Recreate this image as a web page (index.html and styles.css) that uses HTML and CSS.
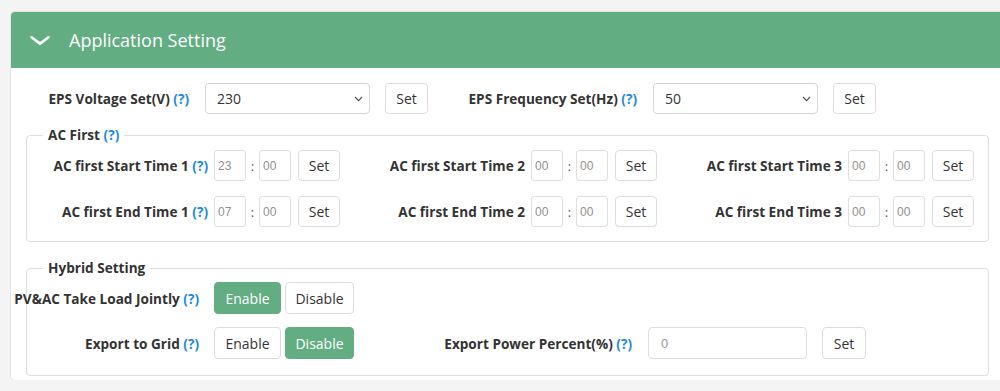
FILE: index.html
```html
<!DOCTYPE html>
<html>
<head>
<meta charset="utf-8">
<link rel="stylesheet" href="styles.css">
</head>
<body>
<div class="card">
  <div class="card-header">
    <svg class="hdr-chevron" width="20" height="9" viewBox="0 0 20 9"><polyline points="1.5,1.2 10,7.6 18.5,1.2" fill="none" stroke="#ffffff" stroke-width="2.6" stroke-linecap="round" stroke-linejoin="round"/></svg>
    <span class="hdr-title">Application Setting</span>
  </div>
  <div class="card-body">
    <div class="eps-row">
      <div class="eps-group">
        <label class="eps-label">EPS Voltage Set(V) <span class="help">(?)</span></label>
        <div class="select-wrap">
          <select class="select"><option>230</option></select>
          <svg class="sel-arrow" width="9" height="6" viewBox="0 0 9 6"><polyline points="1,1 4.5,4.6 8,1" fill="none" stroke="#555" stroke-width="1.3"/></svg>
        </div>
        <button class="btn btn-set">Set</button>
      </div>
      <div class="eps-group eps-group2">
        <label class="eps-label">EPS Frequency Set(Hz) <span class="help">(?)</span></label>
        <div class="select-wrap">
          <select class="select"><option>50</option></select>
          <svg class="sel-arrow" width="9" height="6" viewBox="0 0 9 6"><polyline points="1,1 4.5,4.6 8,1" fill="none" stroke="#555" stroke-width="1.3"/></svg>
        </div>
        <button class="btn btn-set">Set</button>
      </div>
    </div>

    <fieldset class="fs fs-ac">
      <legend class="legend">AC First <span class="help">(?)</span></legend>
      <div class="ac-grid">
        <div class="ac-cell">
          <label class="ac-label">AC first Start Time 1 <span class="help">(?)</span></label>
          <input class="time" value="23"><span class="colon">:</span><input class="time" value="00">
          <button class="btn btn-set ac-set">Set</button>
        </div>
        <div class="ac-cell">
          <label class="ac-label">AC first Start Time 2</label>
          <input class="time" value="00"><span class="colon">:</span><input class="time" value="00">
          <button class="btn btn-set ac-set">Set</button>
        </div>
        <div class="ac-cell">
          <label class="ac-label">AC first Start Time 3</label>
          <input class="time" value="00"><span class="colon">:</span><input class="time" value="00">
          <button class="btn btn-set ac-set">Set</button>
        </div>
        <div class="ac-cell">
          <label class="ac-label">AC first End Time 1 <span class="help">(?)</span></label>
          <input class="time" value="07"><span class="colon">:</span><input class="time" value="00">
          <button class="btn btn-set ac-set">Set</button>
        </div>
        <div class="ac-cell">
          <label class="ac-label">AC first End Time 2</label>
          <input class="time" value="00"><span class="colon">:</span><input class="time" value="00">
          <button class="btn btn-set ac-set">Set</button>
        </div>
        <div class="ac-cell">
          <label class="ac-label">AC first End Time 3</label>
          <input class="time" value="00"><span class="colon">:</span><input class="time" value="00">
          <button class="btn btn-set ac-set">Set</button>
        </div>
      </div>
    </fieldset>

    <fieldset class="fs fs-hybrid">
      <legend class="legend">Hybrid Setting</legend>
      <div class="hy-row">
        <label class="hy-label">PV&amp;AC Take Load Jointly <span class="help">(?)</span></label>
        <button class="btn btn-toggle btn-enable active">Enable</button>
        <button class="btn btn-toggle btn-disable">Disable</button>
      </div>
      <div class="hy-row hy-row2">
        <label class="hy-label">Export to Grid <span class="help">(?)</span></label>
        <button class="btn btn-toggle btn-enable">Enable</button>
        <button class="btn btn-toggle btn-disable active">Disable</button>
        <label class="hy-label hy-label2">Export Power Percent(%) <span class="help">(?)</span></label>
        <input class="num" value="0">
        <button class="btn btn-set export-set">Set</button>
      </div>
    </fieldset>
  </div>
</div>
</body>
</html>
```
FILE: styles.css
```css
html, body {
  margin: 0;
  padding: 0;
  background: #f4f4f4;
  font-family: "Open Sans", "Noto Sans", sans-serif;
  color: #333;
  overflow: hidden;
}

.card {
  margin: 12px 0 0 11px;
  width: 1000px;
  background: #fff;
  border-radius: 4px 0 0 4px;
  box-shadow: 0 0 0 1px #e4e4e4;
}

.card-header {
  height: 56px;
  background: #62ad82;
  border-radius: 4px 0 0 0;
  display: flex;
  align-items: center;
  color: #fff;
}

.hdr-chevron {
  margin-left: 19px;
  margin-top: 1px;
  flex: none;
}

.hdr-title {
  margin-left: 19px;
  font-size: 18px;
  line-height: 24px;
}

.card-body {
  padding: 15px 0 4px 15px;
}

.help {
  color: #1d89d8;
  font-weight: 700;
}

.eps-row {
  display: flex;
  height: 31px;
  align-items: center;
}

.eps-group {
  display: flex;
  align-items: center;
}

.eps-group2 {
  margin-left: 46px;
}

.eps-label {
  width: 163px;
  display: flex;
  justify-content: flex-end;
  white-space: pre;
  font-weight: 700;
  font-size: 13.6px;
}

.select-wrap {
  position: relative;
  margin-left: 16px;
  width: 165px;
  height: 31px;
}

.select {
  appearance: none;
  -webkit-appearance: none;
  width: 165px;
  height: 31px;
  box-sizing: border-box;
  border: 1px solid #d6d6d6;
  border-radius: 4px;
  background: #fff;
  padding: 0 0 0 11px;
  font-family: "Open Sans", "Noto Sans", sans-serif;
  font-size: 14px;
  color: #333;
  outline: none;
}

.sel-arrow {
  position: absolute;
  right: 7px;
  top: 13px;
}

.btn {
  box-sizing: border-box;
  height: 31px;
  border: 1px solid #dcdcdc;
  border-radius: 4px;
  background: #fff;
  font-family: "Open Sans", "Noto Sans", sans-serif;
  font-size: 14px;
  color: #333;
  padding: 0;
  cursor: pointer;
}

.btn-set {
  width: 43px;
  margin-left: 15px;
}

.fs {
  box-sizing: border-box;
  width: 963px;
  margin: 0;
  border: 1px solid #dedede;
  border-radius: 4px;
  min-width: 0;
}

.fs-ac {
  margin-top: 11px;
  padding: 5px 0 14px 0;
}

.legend {
  margin-left: 16px;
  padding: 0 5px;
  font-weight: 700;
  font-size: 13.6px;
  line-height: 20px;
  white-space: pre;
}

.ac-grid {
  display: grid;
  grid-template-columns: 317px 317px 317px;
  row-gap: 15px;
}

.ac-cell {
  display: flex;
  align-items: center;
  height: 31px;
}

.ac-label {
  width: 181px;
  margin-right: 6px;
  display: flex;
  justify-content: flex-end;
  white-space: pre;
  font-weight: 700;
  font-size: 13.6px;
}

.time {
  box-sizing: border-box;
  width: 32px;
  height: 31px;
  border: 1px solid #dedede;
  border-radius: 3px;
  padding: 0 0 0 3px;
  font-family: "Liberation Sans", "DejaVu Sans Condensed", sans-serif;
  font-size: 12px;
  color: #8f8f8f;
  outline: none;
}

.colon {
  width: 13px;
  text-align: center;
  font-size: 13px;
  color: #555;
}

.ac-set {
  width: 42px;
  margin-left: 7px;
}

.fs-hybrid {
  margin-top: 16px;
  padding: 4px 0 16px 0;
}

.hy-row {
  display: flex;
  align-items: center;
  height: 32px;
}

.hy-row2 {
  margin-top: 13px;
}

.hy-label {
  width: 172px;
  flex: none;
  margin-right: 15px;
  display: flex;
  justify-content: flex-end;
  white-space: pre;
  font-weight: 700;
  font-size: 13.6px;
}

.hy-label2 {
  width: 278px;
  margin-right: 16px;
}

.btn-toggle {
  height: 32px;
}

.btn-enable {
  width: 67px;
}

.btn-disable {
  width: 69px;
  margin-left: 4px;
}

.btn-toggle.active {
  background: #62ad82;
  border-color: #62ad82;
  color: #fff;
}

.num {
  box-sizing: border-box;
  width: 159px;
  height: 32px;
  border: 1px solid #dedede;
  border-radius: 4px;
  padding: 0 0 0 12px;
  font-family: "Liberation Sans", sans-serif;
  font-size: 13px;
  color: #999;
  outline: none;
}

.export-set {
  width: 44px;
  height: 32px;
}
```
